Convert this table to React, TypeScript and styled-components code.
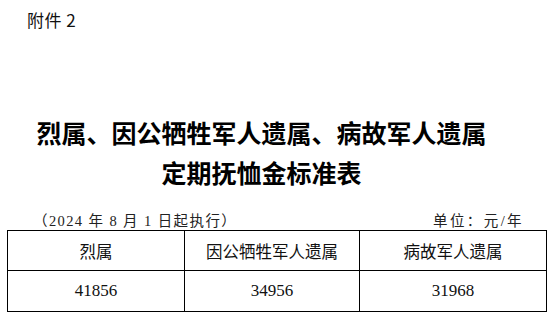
import React from 'react';
import styled, { createGlobalStyle } from 'styled-components';

const GlobalStyle = createGlobalStyle`
  html, body {
    margin: 0;
    padding: 0;
    background: #fff;
  }
  body {
    width: 554px;
    height: 314px;
    overflow: hidden;
    color: #000;
  }
`;

const Page = styled.div`
  display: flex;
  flex-direction: column;
  padding: 0 8px 0 7px;
`;

const Attachment = styled.div`
  font-family: 'Noto Sans CJK SC', 'Noto Sans', sans-serif;
  font-size: 17px;
  line-height: 20px;
  letter-spacing: 0.5px;
  color: #111;
  padding: 10px 0 0 20px;
`;

const Title = styled.h1`
  margin: 0;
  padding: 82px 30px 0 0;
  display: flex;
  flex-direction: column;
  align-items: center;
  font-family: 'Noto Sans CJK SC', sans-serif;
  font-weight: 700;
  font-size: 25px;
  line-height: 40px;
  color: #000;
`;

const MetaRow = styled.div`
  display: flex;
  justify-content: space-between;
  align-items: center;
  margin-top: 16px;
  height: 22px;
  padding: 0 22px 0 26px;
  font-family: 'Liberation Serif', 'Noto Sans CJK SC', serif;
  font-size: 14.5px;
  color: #222;
`;

const Note = styled.span<{ $spacing: number }>`
  letter-spacing: ${({ $spacing }) => $spacing}px;
`;

const Table = styled.table`
  border-collapse: collapse;
  width: 539px;
  table-layout: fixed;
  border: 1.5px solid #000;
`;

const Cell = styled.td<{ $head?: boolean }>`
  border: 1px solid #000;
  height: ${({ $head }) => ($head ? '39px' : '40px')};
  padding: 0;
  text-align: center;
  vertical-align: middle;
  font-family: ${({ $head }) =>
    $head ? "'Noto Sans CJK SC', sans-serif" : "'Liberation Serif', serif"};
  font-size: ${({ $head }) => ($head ? '16.5px' : '17px')};
  color: #111;
`;

const columns = ['烈属', '因公牺牲军人遗属', '病故军人遗属'];
const amounts = ['41856', '34956', '31968'];

export default function App() {
  return (
    <Page>
      <GlobalStyle />
      <Attachment>附件 2</Attachment>
      <Title>
        <span>烈属、因公牺牲军人遗属、病故军人遗属</span>
        <span>定期抚恤金标准表</span>
      </Title>
      <MetaRow>
        <Note $spacing={1.4}>（2024 年 8 月 1 日起执行）</Note>
        <Note $spacing={2.4}>单位：元/年</Note>
      </MetaRow>
      <Table>
        <colgroup>
          <col style={{ width: 177 }} />
          <col style={{ width: 175 }} />
          <col style={{ width: 187 }} />
        </colgroup>
        <tbody>
          <tr>
            {columns.map((c) => (
              <Cell key={c} $head>
                {c}
              </Cell>
            ))}
          </tr>
          <tr>
            {amounts.map((a) => (
              <Cell key={a}>{a}</Cell>
            ))}
          </tr>
        </tbody>
      </Table>
    </Page>
  );
}
